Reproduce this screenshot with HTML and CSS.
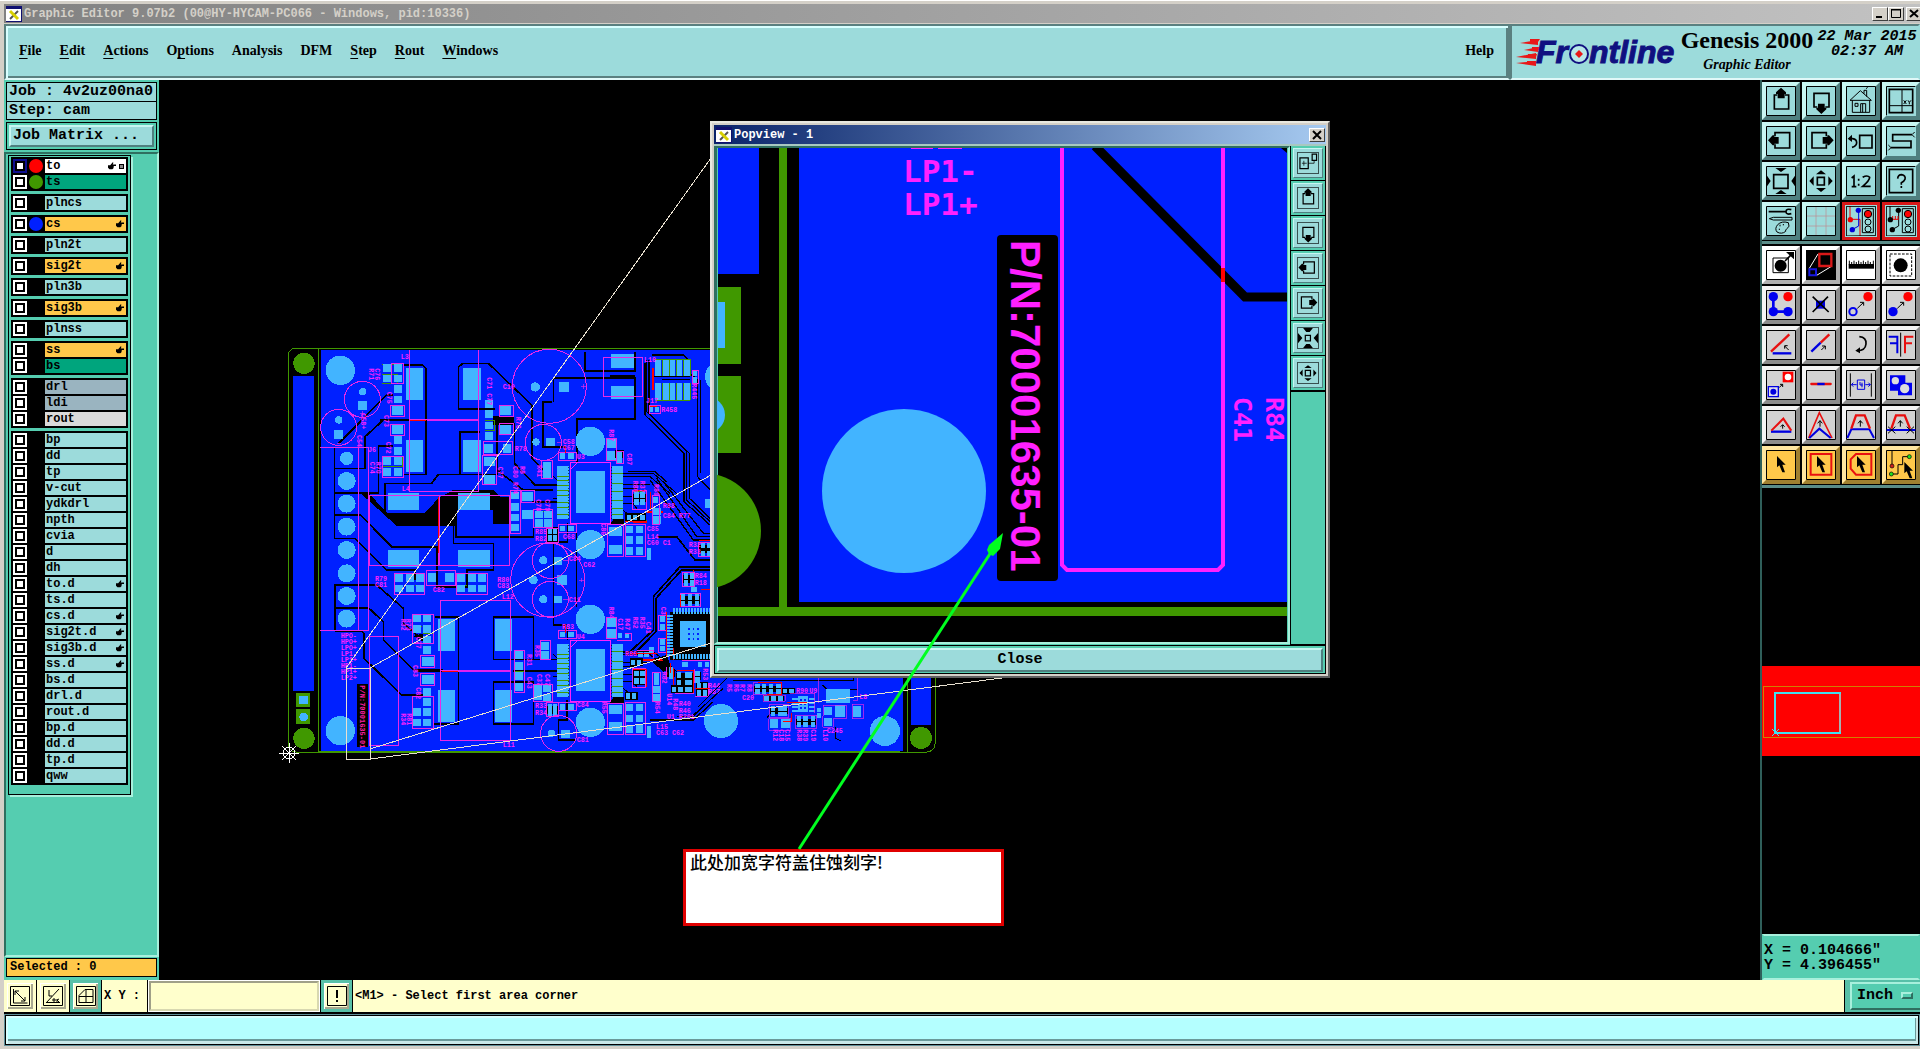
FILE: index.html
```html
<!DOCTYPE html>
<html lang="en">
<head>
<meta charset="utf-8">
<title>Graphic Editor 9.07b2</title>
<link rel="stylesheet" href="styles.css">
</head>
<body>
<svg class="defs" aria-hidden="true">
<defs>
<symbol id="xwin" viewBox="0 0 16 16"><path fill="#fff" d="M0 0h16v16H0z"/><path fill="#101070" d="M0 0h16v3H0zM15 0h1v16h-1zM0 15h16v1H0z"/><path stroke="#555" stroke-width="2" d="M4 13L12 5"/><path stroke="#d8d000" stroke-width="3" d="M4 5l8 8"/></symbol>
<symbol id="hand" viewBox="0 0 22 20"><path d="M0 8h6l7-8 2 1-2 5h9v4h-6l-1 6-3 3H4L0 15z"/></symbol>
<g id="frame"><path fill="none" stroke="#000" stroke-width="3" d="M1.500 1.500h87v87h-87z"/></g>
<symbol id="up" viewBox="0 0 90 90"><use href="#frame"/><path class="k5" d="M34 27H25V69H68V27H57"/><path d="M45 5l15 14v5h-4v13H35V24h-5v-5z"/></symbol>
<symbol id="down" viewBox="0 0 90 90"><use href="#frame"/><path class="k5" d="M34 63H24V22H69V63H58"/><path d="M46 84l15-14v-5h-5V53H36v12h-5v5z"/></symbol>
<symbol id="left" viewBox="0 0 90 90"><use href="#frame"/><path class="k5" d="M27 31V20H71V66H27V55"/><path d="M6 43l14-15h5v5h13v20H25v5h-5z"/></symbol>
<symbol id="right" viewBox="0 0 90 90"><use href="#frame"/><path class="k5" d="M61 31V20H18V66H61V55"/><path d="M83 43l-14-15h-5v5H50v20h14v5h5z"/></symbol>
<symbol id="house" viewBox="0 0 90 90"><use href="#frame"/><path class="k3" d="M12 43L43 14 76 43zM19 43V79H71V43M54 23V13h8v19M44 79V53h15v26M27 52h9v9h-9zM50 53v26M60 8l5-4"/></symbol>
<symbol id="xy" viewBox="0 0 90 90"><path class="k5" d="M10 10H80V80H10z"/><path class="k3" d="M1.500 88V1.500H88M48 10V80M10 59H80M53 43l8 11M61 43l-8 11M66 43l4 6 5-6M70 49v6"/></symbol>
<symbol id="undo" viewBox="0 0 90 90"><use href="#frame"/><path class="k5" d="M41 28H78V66H41z"/><path class="k5" stroke-width="7" d="M12 38h8q12 2 12 12t-14 14"/><path d="M5 38l13-12v22z"/></symbol>
<symbol id="ess" viewBox="0 0 90 90"><path class="k3" d="M1.500 88V1.500H88M86 18l-8 8 8 8M7 57l8 8-8 8"/><path class="k5" d="M78 26H20V45H75V65H15"/></symbol>
<symbol id="zin" viewBox="0 0 90 90"><use href="#frame"/><path class="k5" d="M23 26H66V67H23z"/><path d="M28 6h34L45 18zM28 84h34L45 72zM2 28l12 17L2 62zM88 28L76 45l12 17z"/></symbol>
<symbol id="zout" viewBox="0 0 90 90"><use href="#frame"/><path class="k5" d="M34 34H55V57H34z"/><path d="M45 13l15 12H30zM45 78l15-12H30zM10 45l13-14v28zM80 45L67 31v28z"/></symbol>
<symbol id="zin2" viewBox="0 0 90 90"><use href="#frame"/><path class="k5" d="M34 34H55V57H34z"/><path d="M25 4h40L52 20H38zM25 86h40L52 70H38zM4 25l18 20L4 66zM86 25L68 45l18 21z"/></symbol>
<symbol id="pop" viewBox="0 0 90 90"><use href="#frame"/><path class="k5" d="M12 24H46V68H12zM62 9H80V34H62z"/><path class="k3" d="M46 46h24V34M20 46h20M28 36v20"/></symbol>
<symbol id="one2" viewBox="0 0 90 90"><use href="#frame"/><path class="k5" d="M17 36l7-6V62M17 62h14M38 38v6M38 53v6M50 34q14-8 21 0 0 10-21 27h24"/></symbol>
<symbol id="help" viewBox="0 0 90 90"><path class="k5" d="M10 10H80V80H10z"/><path class="k3" d="M1.500 88V1.500H88"/><path class="k5" d="M35 38q1-12 12-12 13 2 10 14-2 6-11 10v6M46 60v6"/></symbol>
<symbol id="paint" viewBox="0 0 90 90"><use href="#frame"/><path class="k5" d="M8 17H58M76 11q-16-4-16 6t16 6"/><path class="k3" d="M10 38l12-4H78v8H22zM35 56q12-12 32-6 6 12-4 18-6 4-4 8-12 10-26 2-8-10 2-22z"/><path class="k3" d="M42 56v5M52 54v4M40 68v4"/></symbol>
<symbol id="grid" viewBox="0 0 90 90"><path stroke="#c08890" stroke-width="2" fill="none" d="M30 2V88M60 2V88M2 30H88M2 60H88"/><use href="#frame"/></symbol>
<symbol id="sigA" viewBox="0 0 90 90"><path fill="none" stroke="#e00" stroke-width="3" d="M12 0V40H42V90"/><circle cx="13" cy="41" r="8" fill="#e00"/><path fill="none" stroke="#00d" stroke-width="3" d="M38 13V60L20 70"/><circle cx="37" cy="13" r="8" fill="#00d"/><circle cx="19" cy="71" r="8" fill="#00d"/><path class="k3" d="M1 90V1H89V89zM49 8H82V80H49z"/><circle cx="66" cy="24" r="11" fill="red" stroke="#000" stroke-width="3"/><circle class="k3" cx="66" cy="48" r="9"/><circle class="k3" cx="66" cy="69" r="9"/></symbol>
<symbol id="sigB" viewBox="0 0 90 90"><path class="k3" d="M12 0V40M38 13V60L20 70"/><path fill="none" stroke="#e00" stroke-width="3" d="M14 40H38M20 30V40M28 30V40M36 30V40"/><circle cx="13" cy="41" r="8"/><circle cx="37" cy="13" r="8"/><circle cx="19" cy="71" r="8"/><path class="k3" d="M1 90V1H89V89zM49 8H82V80H49z"/><circle cx="66" cy="24" r="11" fill="red" stroke="#000" stroke-width="3"/><circle class="k3" cx="66" cy="48" r="9"/><circle class="k3" cx="66" cy="69" r="9"/></symbol>
<symbol id="feat" viewBox="0 0 90 90"><use href="#frame"/><path class="k3" d="M21 24H67V68H21z"/><circle cx="44" cy="47" r="18"/><path class="k5" d="M57 33L76 14"/><path d="M60 6h24v22z"/></symbol>
<symbol id="popa" viewBox="0 0 90 90"><path d="M0 0H90V90H0z"/><path fill="none" stroke="#fff" stroke-width="3" d="M10 55L36 12M32 76L78 48"/><path fill="none" stroke="#d81818" stroke-width="7" d="M40 12H76V48H40z"/><path fill="none" stroke="#1818e0" stroke-width="6" d="M10 58H30V76H10z"/></symbol>
<symbol id="ruler" viewBox="0 0 90 90"><use href="#frame"/><path d="M8 42H84V56H8z"/><path stroke="#000" stroke-width="3" d="M10 32V44M17 36V44M24 32V44M31 36V44M38 32V44M45 36V44M52 32V44M59 36V44M66 32V44M73 36V44M82 32V44"/></symbol>
<symbol id="selall" viewBox="0 0 90 90"><use href="#frame"/><path class="k3" stroke-dasharray="8 4" d="M12 12H77V78H12z"/><circle cx="44" cy="46" r="21"/></symbol>
<symbol id="net" viewBox="0 0 90 90"><use href="#frame"/><path fill="none" stroke="#0000f0" stroke-width="8" d="M22 21V65H66"/><g fill="#0000f0"><circle cx="22" cy="20" r="14"/><circle cx="22" cy="65" r="14"/><circle cx="66" cy="65" r="14"/></g><circle cx="66" cy="20" r="14" fill="red"/></symbol>
<symbol id="del" viewBox="0 0 90 90"><use href="#frame"/><path fill="#0000e0" d="M30 32H57V56H30z"/><path class="k5" d="M20 20L68 66M66 20L20 66"/></symbol>
<symbol id="mv" viewBox="0 0 90 90"><use href="#frame"/><circle cx="66" cy="20" r="14" fill="red"/><circle cx="21" cy="65" r="11" fill="none" stroke="#0000f0" stroke-width="6"/><path class="k3" d="M34 55L52 38M42 37h11v10"/></symbol>
<symbol id="cp" viewBox="0 0 90 90"><use href="#frame"/><circle cx="66" cy="20" r="14" fill="red"/><circle cx="21" cy="65" r="14" fill="#0000f0"/><path class="k3" d="M34 55L52 38M42 37h11v10"/></symbol>
<symbol id="ang" viewBox="0 0 90 90"><use href="#frame"/><path fill="none" stroke="#e81010" stroke-width="7" d="M15 65L70 13"/><path fill="none" stroke="#0000e0" stroke-width="7" d="M20 70H76"/><path class="k3" d="M68 60L56 48M56 56v-9h9"/></symbol>
<symbol id="ext" viewBox="0 0 90 90"><use href="#frame"/><path stroke="#e81010" stroke-width="7" d="M44 38L70 13"/><path stroke="#0000e0" stroke-width="7" d="M16 65L44 38"/><path class="k3" d="M46 60L58 48M48 48h10v10"/></symbol>
<symbol id="rot" viewBox="0 0 90 90"><use href="#frame"/><path class="k5" d="M40 20Q62 22 60 42T34 62"/><path d="M28 62l14-10v18z"/></symbol>
<symbol id="mir" viewBox="0 0 90 90"><use href="#frame"/><path stroke="#000" stroke-width="3" d="M44 8V80"/><path fill="none" stroke="#0000e0" stroke-width="6" d="M8 20H34V70M12 40H34"/><path fill="none" stroke="#e81010" stroke-width="6" d="M82 20H57V70M57 40H78"/></symbol>
<symbol id="repl" viewBox="0 0 90 90"><use href="#frame"/><path fill="red" d="M50 5H82V37H50z"/><circle cx="66" cy="21" r="10" fill="#fff"/><path fill="#dde" stroke="#0000e0" stroke-width="4" d="M7 50H37V80H7z"/><circle cx="22" cy="65" r="9" fill="#0000e0"/><path class="k3" d="M40 52L50 43M42 43h8v8"/></symbol>
<symbol id="brk" viewBox="0 0 90 90"><use href="#frame"/><path stroke="#e81010" stroke-width="7" stroke-linecap="round" d="M16 42H74"/><path stroke="#0000e0" stroke-width="7" d="M34 42H56"/></symbol>
<symbol id="meas" viewBox="0 0 90 90"><use href="#frame"/><path class="k3" d="M13 10V80M76 10V80"/><path fill="none" stroke="#0000e0" stroke-width="3" d="M34 30H56V58H34zM16 44H32M22 38l-6 6 6 6M58 44H73M67 38l6 6-6 6M42 36v9h8M48 38V52"/></symbol>
<symbol id="surf" viewBox="0 0 90 90"><use href="#frame"/><path fill="#0000f0" d="M12 16H58V38H78V76H36V62H12z"/><circle cx="28" cy="32" r="11" fill="#ddd"/><circle cx="56" cy="56" r="14" fill="#ddd"/></symbol>
<symbol id="tri1" viewBox="0 0 90 90"><use href="#frame"/><path stroke="#0000e0" stroke-width="7" d="M15 65H76"/><path fill="none" stroke="#e81010" stroke-width="6" d="M16 62L52 26 76 62"/><path class="k3" d="M50 56V45M44 50l6-6 6 6"/></symbol>
<symbol id="tri2" viewBox="0 0 90 90"><use href="#frame"/><path fill="none" stroke="#e81010" stroke-width="5" d="M8 84L40 8 78 84"/><path fill="none" stroke="#0000e0" stroke-width="6" d="M10 84L40 56 74 84"/><path class="k3" d="M42 50V32M35 40l7-8 7 8"/></symbol>
<symbol id="trap1" viewBox="0 0 90 90"><use href="#frame"/><path fill="none" stroke="#0000e0" stroke-width="6" d="M4 84L16 58H70L84 84"/><path fill="none" stroke="#e81010" stroke-width="7" d="M16 56L30 16H56L72 56"/><path class="k3" d="M43 50V32M36 40l7-8 7 8"/></symbol>
<symbol id="trap2" viewBox="0 0 90 90"><use href="#frame"/><path stroke="#0000e0" stroke-width="6" d="M2 60H88"/><path fill="none" stroke="#e81010" stroke-width="7" d="M16 56L30 16H56L72 56"/><path class="k3" d="M43 50V32M36 40l7-8 7 8M6 50L28 70M28 50L6 70M62 50L84 70M84 50L62 70"/></symbol>
<g id="arrowhead"><path d="M33 18V52L40 46 49 67H57L49 44H59z"/></g>
<symbol id="cur1" viewBox="0 0 90 90"><use href="#frame"/><use href="#arrowhead"/></symbol>
<symbol id="cur2" viewBox="0 0 90 90"><use href="#frame"/><path fill="none" stroke="#e81010" stroke-width="6" d="M14 12H76V74H14z"/><use href="#arrowhead"/></symbol>
<symbol id="cur3" viewBox="0 0 90 90"><use href="#frame"/><path fill="none" stroke="#e81010" stroke-width="6" d="M30 12H76V74H30L14 56V28z"/><use href="#arrowhead"/></symbol>
<symbol id="cur4" viewBox="0 0 90 90"><use href="#frame"/><path class="k3" d="M18 2V48M16 72H36V44H50V20H70"/><circle cx="18" cy="48" r="6" fill="#d02020" stroke="#000" stroke-width="2"/><circle cx="16" cy="72" r="6" fill="#20e020" stroke="#000" stroke-width="2"/><circle cx="70" cy="20" r="6" fill="#20e020" stroke="#000" stroke-width="2"/><use href="#arrowhead" x="22" y="18"/></symbol>
<symbol id="b1" viewBox="0 0 20 20"><path fill="none" stroke="#000" d="M.5.5h19v19H.5zM3.500 3v14h14M5 5l10 10M5 9V5h4M15 11v4h-4"/></symbol>
<symbol id="b2" viewBox="0 0 20 20"><path fill="none" stroke="#000" d="M.5.5h19v19H.5zM3 17L16 3M3 16.500h14M6 4v6h3M10 13h2v2h-2zM14 13v3M16 13l-2 1 2 2"/></symbol>
<symbol id="b3" viewBox="0 0 20 20"><path fill="none" stroke="#000" d="M.5.5h19v19H.5zM3 16.500h14v-13H9l-6 6zM10 3v14M3 10.500h14"/></symbol>
<symbol id="b4" viewBox="0 0 20 20"><path fill="none" stroke="#000" d="M.5.5h19v19H.5z"/><path d="M9 4h2v8H9zM9 14h2v2H9z"/></symbol>
<g id="qfp"><path fill="none" stroke="#ff20ff" stroke-width="3" d="M871 367H992V550H871zM871 390L892 367"/><path fill="#42b4ff" d="M887 392H974V519H887zM831 378H866V537H831zM995 378H1029V537H995z"/><path stroke="#000" stroke-width="2" stroke-dasharray="3 6" d="M866 380V537M995 380V537"/><path stroke="#409800" stroke-width="3" d="M831 408h35M831 421h35M831 435h35M831 452h35M831 466h35M831 486h35M831 502h35M831 522h35M995 400h34M995 430h34M995 455h34M995 480h34M995 505h34M995 522h34"/><path d="M1000 538h32v16H990z"/><path stroke="#000" stroke-width="3" fill="none" d="M1030 400h90l70 60M1030 410h80l60 50M820 410l10 8M818 475h12M1030 432h80M1030 445h40M1030 470h60M1030 490h30l10 16M1030 512l30 22"/></g>
</defs>
</svg>

<div class="app">
  <header class="titlebar">
    <svg class="appicon"><use href="#xwin"/></svg>
    <h1>Graphic Editor 9.07b2 (00@HY-HYCAM-PC066 - Windows, pid:10336)</h1>
    <div class="winbtns">
      <button aria-label="Minimize"><svg viewBox="0 0 14 12"><path d="M3 8h6v2H3z"/></svg></button>
      <button aria-label="Maximize"><svg viewBox="0 0 14 12"><path fill="none" stroke="#000" d="M2.500 2h9v7.500h-9zM2 1.500h10"/></svg></button>
      <button aria-label="Close window"><svg viewBox="0 0 14 12"><path stroke="#000" stroke-width="2" d="M3 2l8 7M11 2L3 9"/></svg></button>
    </div>
  </header>

  <div class="menurow">
    <nav class="menubar">
      <a href="#"><u>F</u>ile</a><a href="#"><u>E</u>dit</a><a href="#"><u>A</u>ctions</a><a href="#">O<u>p</u>tions</a><a href="#">Analysis</a><a href="#">DFM</a><a href="#"><u>S</u>tep</a><a href="#"><u>R</u>out</a><a href="#"><u>W</u>indows</a>
      <a class="helpmenu" href="#">Help</a>
    </nav>
    <div class="brand">
      <svg class="logo" viewBox="0 0 162 32" role="img" aria-label="Frontline">
        <g fill="#e81818"><path d="M4 7l18-3v5zM8 14l14-3v5zM0 21l20-4v6zM0 27l20-2v5z"/><path d="M14 3h10l-2 3h-8zM16 11h8l-1 3h-7zM12 18h9l-1 3h-8zM11 25h9l-1 3h-8z"/></g>
        <text class="logotext" x="20" y="27">Fr</text><text class="logotext" x="73" y="27">ntline</text>
        <circle cx="63" cy="18" r="9" fill="#b8e8e8" stroke="#101080" stroke-width="2"/><path fill="#e81818" d="M63 14l4 4-4 4-4-4z"/>
      </svg>
      <div class="product"><strong>Genesis 2000</strong><em>Graphic Editor</em></div>
      <div class="clock">22 Mar 2015<br>02:37 AM</div>
    </div>
  </div>

  <div class="main">
    <aside class="sidebar">
      <div class="jobinfo"><div>Job : 4v2uz00na0</div><div>Step: cam</div></div>
      <div class="matrixwrap"><button class="matrix">Job Matrix ...</button></div>
      <div class="layerarea">
        <div class="layers">
          <div class="group">
            <label class="row cur"><input type="checkbox"><i class="dot red"></i><span class="white">to<svg class="hand"><use href="#hand"/></svg><b class="sq"></b></span></label>
            <label class="row"><input type="checkbox"><i class="dot green"></i><span class="mask">ts</span></label>
          </div>
          <div class="group"><label class="row"><input type="checkbox"><i></i><span>plncs</span></label></div>
          <div class="group"><label class="row"><input type="checkbox"><i class="dot blue"></i><span class="sig">cs<svg class="hand"><use href="#hand"/></svg></span></label></div>
          <div class="group"><label class="row"><input type="checkbox"><i></i><span>pln2t</span></label></div>
          <div class="group"><label class="row"><input type="checkbox"><i></i><span class="sig">sig2t<svg class="hand"><use href="#hand"/></svg></span></label></div>
          <div class="group"><label class="row"><input type="checkbox"><i></i><span>pln3b</span></label></div>
          <div class="group"><label class="row"><input type="checkbox"><i></i><span class="sig">sig3b<svg class="hand"><use href="#hand"/></svg></span></label></div>
          <div class="group"><label class="row"><input type="checkbox"><i></i><span>plnss</span></label></div>
          <div class="group">
            <label class="row"><input type="checkbox"><i></i><span class="sig">ss<svg class="hand"><use href="#hand"/></svg></span></label>
            <label class="row"><input type="checkbox"><i></i><span class="mask">bs</span></label>
          </div>
          <div class="group">
            <label class="row"><input type="checkbox"><i></i><span class="drill">drl</span></label>
            <label class="row"><input type="checkbox"><i></i><span class="drill">ldi</span></label>
            <label class="row"><input type="checkbox"><i></i><span class="rout">rout</span></label>
          </div>
          <div class="group">
            <label class="row"><input type="checkbox"><i></i><span>bp</span></label>
            <label class="row"><input type="checkbox"><i></i><span>dd</span></label>
            <label class="row"><input type="checkbox"><i></i><span>tp</span></label>
            <label class="row"><input type="checkbox"><i></i><span>v-cut</span></label>
            <label class="row"><input type="checkbox"><i></i><span>ydkdrl</span></label>
            <label class="row"><input type="checkbox"><i></i><span>npth</span></label>
            <label class="row"><input type="checkbox"><i></i><span>cvia</span></label>
            <label class="row"><input type="checkbox"><i></i><span>d</span></label>
            <label class="row"><input type="checkbox"><i></i><span>dh</span></label>
            <label class="row"><input type="checkbox"><i></i><span>to.d<svg class="hand"><use href="#hand"/></svg></span></label>
            <label class="row"><input type="checkbox"><i></i><span>ts.d</span></label>
            <label class="row"><input type="checkbox"><i></i><span>cs.d<svg class="hand"><use href="#hand"/></svg></span></label>
            <label class="row"><input type="checkbox"><i></i><span>sig2t.d<svg class="hand"><use href="#hand"/></svg></span></label>
            <label class="row"><input type="checkbox"><i></i><span>sig3b.d<svg class="hand"><use href="#hand"/></svg></span></label>
            <label class="row"><input type="checkbox"><i></i><span>ss.d<svg class="hand"><use href="#hand"/></svg></span></label>
            <label class="row"><input type="checkbox"><i></i><span>bs.d</span></label>
            <label class="row"><input type="checkbox"><i></i><span>drl.d</span></label>
            <label class="row"><input type="checkbox"><i></i><span>rout.d</span></label>
            <label class="row"><input type="checkbox"><i></i><span>bp.d</span></label>
            <label class="row"><input type="checkbox"><i></i><span>dd.d</span></label>
            <label class="row"><input type="checkbox"><i></i><span>tp.d</span></label>
            <label class="row"><input type="checkbox"><i></i><span>qww</span></label>
          </div>
        </div>
      </div>
      <div class="selwrap"><div class="selected">Selected : 0</div></div>
    </aside>

    <main class="canvas">
      <svg class="board" viewBox="159 80 1602 900" shape-rendering="crispEdges">
        <rect x="288" y="348" width="647" height="404" rx="8" fill="#000" stroke="#409800"/>
        <path fill="#0020ff" d="M321 350H903V751H321zM911 376H931V725H911z"/>
        <path stroke="#409800" d="M907.500 350V752"/>
        <circle cx="921" cy="738" r="11" fill="#409800"/>
        <circle cx="721" cy="721" r="17" fill="#42b4ff"/><circle cx="885" cy="731" r="15" fill="#42b4ff"/>
        <svg x="280" y="340" width="440" height="420" viewBox="0 0 1320 1260" overflow="visible">
          <path stroke="#409800" stroke-width="4" d="M115 26V1236M115 26H1290M115 1236H1860"/>
          <path fill="#0020ff" d="M39 108H102V1053H39z"/>
          <g fill="#409800"><circle cx="72" cy="70" r="32"/><circle cx="72" cy="1195" r="32"/><path d="M48 1059H90V1101H48zM48 1108H90V1152H48z"/></g>
          <path fill="#42b4ff" d="M57 1067H84V1093H57z"/><circle cx="71" cy="1131" r="13" fill="#42b4ff"/>
          <!-- copper clearances -->
          <path d="M240 458H265L320 518H410L435 518 478 472 520 450H640L660 470H690V552H640V510H530V558H350zM640 228H703V256H640zM300 236H390V244H300zM400 888L430 880V905zM410 986H490V996H410zM231 1033H264V1221H231zM1170 815H1290V960H1170zM1110 960L1160 945 1175 985 1150 995z"/>
          <g fill="none" stroke="#000" stroke-width="5">
            <path d="M370 75H428L438 85V403H370M535 206V82L548 70H625L755 195V355L790 390M645 206H535M600 275H540V403H600M163 325V385H255V290L310 240M176 310L320 165H340M163 385V458H295V318H340M163 458V524H240L335 620H470V740H560V690H640V610H520V470M163 524V595H225L320 690H405V720M315 515V430H455L475 403H650L660 390M650 230V390L730 450H820M703 250V370L765 435H830M165 870V735H290L370 805V850L440 910M165 803H265L310 845V900L400 990H480M165 873H245L252 880V955L365 1065H440M465 1150V1152H535V830H465M640 830H760V958H640V830M640 1025H760V1152H640zM700 958H830M700 992H830M528 470V590H760V560M820 610V855H860M915 35V92H1065V35M820 185V113H1065V237H890V365M817 185H789V320H855M889 550V800M755 485H830M862 550V605H830M862 860V900"/>
            <path d="M860 1080V1140H835V1200H885M1290 660H1245L1190 590H1130M1290 680H1200L1120 770V870L1050 935H1030M1290 690H1205L1128 775V875L1060 945"/>
            <path stroke-width="4" d="M1100 60V215L1220 335V480L1290 545M1107 60V220L1228 340V475L1290 535M1095 70V225L1212 340V485L1290 555M1115 45H1210L1230 65V100L1253 120V410L1290 450M1262 120V400M1120 110H1230M1130 415L1250 590H1290M1110 420L1240 600H1290M1150 425L1270 580H1290M1045 395H1125L1160 425M1190 1130H1240L1310 1060M1110 1140H1240L1300 1085"/>
          </g>
          <path stroke="red" stroke-width="5" fill="none" d="M388 240H438M477 470V675M485 992H535M1118 85V150M1090 960H1150M1060 985V1010M1180 925V960M1240 690V700M1100 515H1150"/>
          <use href="#qfp"/><use href="#qfp" y="534"/>
          <!-- mounting holes and connector column -->
          <g fill="#42b4ff">
            <circle cx="181" cy="91" r="44"/><circle cx="181" cy="1172" r="44"/><circle cx="931" cy="304" r="44"/><circle cx="931" cy="614" r="44"/><circle cx="931" cy="838" r="44"/><circle cx="931" cy="1147" r="44"/><circle cx="1319" cy="110" r="44"/>
            <circle cx="200" cy="355" r="20"/><circle cx="200" cy="423" r="27"/><circle cx="200" cy="491" r="27"/><circle cx="200" cy="560" r="27"/><circle cx="200" cy="630" r="27"/><circle cx="200" cy="700" r="27"/><circle cx="200" cy="768" r="27"/><circle cx="200" cy="836" r="27"/>
            <circle cx="248" cy="155" r="11"/><circle cx="176" cy="240" r="11"/><circle cx="766" cy="141" r="14"/><circle cx="768" cy="306" r="11"/><circle cx="790" cy="661" r="12"/><circle cx="760" cy="720" r="13"/><circle cx="790" cy="778" r="12"/><circle cx="814" cy="1180" r="11"/>
            <path d="M234 184H261V210H234zM162 270H189V297H162zM837 126H867V156H837zM798 294H824V318H798zM822 650H846V674H822zM831 705H860V735H831zM822 768H846V790H822zM843 1170H870V1194H843z"/>
            <path d="M378 83H429V180H378zM549 83H603V180H549zM378 300H429V396H378zM549 300H603V396H549zM324 459H417V510H324zM534 459H630V510H534zM324 630H417V681H324zM534 630H630V681H534zM474 837H525V933H474zM645 837H696V933H645zM474 1050H525V1146H474zM645 1050H696V1146H645zM993 41H1062V84H993zM993 137H1062V177H993z"/>
            <path d="M1126 57H1144V109H1126zM1148 57H1166V109H1148zM1170 57H1186V109H1170zM1190 57H1207V109H1190zM1211 57H1229V109H1211zM1126 128H1144V181H1126zM1148 128H1166V181H1148zM1170 128H1186V181H1170zM1190 128H1207V181H1190zM1211 128H1229V181H1211z"/>
            <path d="M1200 842H1278V920H1200zM1275 478H1290V504H1275z"/>
          </g>
          <path fill="none" stroke="#409800" stroke-width="3" d="M1146 57V109M1168 57V109M1188 57V109M1209 57V109M1231 57V109M1146 128V181M1168 128V181M1188 128V181M1209 128V181M1231 128V181"/>
          <path fill="none" stroke="#42b4ff" stroke-width="17" stroke-dasharray="5 4" d="M1180 812H1290M1180 949H1290M1169 825V950"/>
          <path fill="none" stroke="#0020ff" stroke-width="5" stroke-dasharray="5 8" d="M1225 866H1258M1225 881H1258M1225 896H1258"/>
          <path fill="none" stroke="#409800" stroke-width="3" d="M307 72H366M307 103H352V130H307M340 350H366V380H310M615 242H642V270H615M345 700H400M405 735H436M530 735H560M400 860H425M430 880H458M706 995H732M785 950H808M1060 455H1095M1040 540H1100M765 515H815M800 580H830M1060 990H1095M800 1110H830M1035 1065H1065M1125 57H1230M1125 181H1230"/>
          <!-- chip pads -->
          <path fill="none" stroke="#42b4ff" stroke-width="23" d="M309 83h24M341 83h24M309 115h24M341 115h24M341 147h24M341 178h24M341 300h24M341 332h24M309 363h24M341 363h24M309 395h24M341 395h24M616 191h24M616 222h24M616 256h24M616 288h24M693 466h24M693 500h24M693 532h24M693 562h24M766 523h24M792 523h24M766 548h24M792 548h24M346 713h24M378 713h24M408 713h24M378 745h24M408 745h24M346 745h24M532 713h24M563 713h24M594 713h24M532 745h24M563 745h24M594 745h24M400 835h24M430 835h24M400 867h24M430 867h24M430 899h24M430 930h24M430 1055h24M430 1085h24M430 1115h24M400 1115h24M400 1147h24M430 1147h24M706 945h24M706 978h24M706 1008h24M706 1040h24M762 1045h24M788 1045h24M762 1068h24M788 1072h24M788 378h24M788 402h24M784 918h24M784 944h24M1038 568h22M1068 568h22M1038 600h22M1068 600h22M1068 632h22M1038 632h22M1038 1102h22M1068 1102h22M1068 1135h22M1038 1135h22M1038 1166h22M1068 1166h22M1120 514h22M1120 540h22M1120 1048h22M1120 1072h22"/>
          <path fill="none" stroke="#42b4ff" stroke-width="27" d="M336 212h34M336 267h34M658 212h36M658 267h36M612 363h34M612 417h34M613 324h26M670 324h24M726 468h34M726 522h34M443 713h26M496 713h26M425 965h36M425 1017h36M987 573h38M987 627h38M987 1108h38M987 1160h38M980 310h27M980 345h27M980 846h27M980 880h27"/>
          <path fill="none" stroke="#000" stroke-width="24" d="M1006 343h26M1058 475h40M1036 532h62M802 574h34M802 594h34M1258 628h32M1208 717h36M1202 780h60M1050 967h38M1058 1000h40M1058 1022h40M1162 999h24M1188 1010h54M1188 1028h54M1243 1008h20M1172 1048h66M1248 1038h36M1248 1058h36M802 1109h34M1035 1067h38"/>
          <path fill="none" stroke="#42b4ff" stroke-width="17" d="M840 348h16M864 348h18M840 565h16M864 565h18M840 883h16M864 883h18M840 1100h16M864 1100h18M1108 208h12M1126 208h12M1238 100h14M1238 120h14M1012 343h14M1012 360h14M1015 886h12M1035 886h12M1062 465h14M1080 465h14M1062 485h14M1080 485h14M1040 532h12M1060 532h12M1080 532h14M1120 480h14M805 574h12M820 574h12M805 594h12M820 594h12M1262 616h12M1280 616h12M1262 640h12M1280 640h12M1212 707h12M1230 707h12M1212 728h12M1230 728h12M1232 748h18M1204 770h12M1204 790h12M1225 770h12M1246 770h12M1225 790h12M1246 790h12M1100 632h14M1100 650h14M1140 836h14M1140 860h14M1140 905h14M1140 925h14M1074 943h14M1092 943h14M1108 930h14M1054 967h12M1072 967h12M1062 1000h14M1080 1000h14M1062 1022h14M1080 1022h14M1122 1008h14M1122 1025h14M1166 990h14M1166 1008h14M1205 973h18M1190 1005h14M1215 1005h22M1190 1027h14M1215 1027h22M1245 1000h14M1245 1020h14M1175 1048h14M1195 1048h14M1215 1048h22M1250 1036h12M1268 1036h12M1250 1058h12M1268 1058h12M1255 973h12M1275 973h12M805 1100h12M820 1100h12M805 1118h12M820 1118h12M1038 1067h12M1056 1067h12M1100 1166h14M1100 1184h14"/>
          <path stroke="#000" stroke-width="4" d="M1145 119H1230M990 108h75"/>
          <!-- silkscreen -->
          <g fill="none" stroke="#e828e8" stroke-width="3">
            <path d="M388 30V453H595V30M388 238H595M268 466H688V676H268zM477 466V676M481 780H691V1202H481zM481 992H691M120 322H266V871H120M235 322V871M269 889H355V1216H269zM970 52H1087V170H970z"/>
            <path stroke="#e020f0" stroke-width="6" d="M440 240H595M477 640V676M535 992H690"/>
            <circle cx="247" cy="178" r="54"/><circle cx="176" cy="262" r="54"/><circle cx="808" cy="139" r="111"/><circle cx="790" cy="307" r="54"/><circle cx="803" cy="720" r="111"/><circle cx="811" cy="661" r="54"/><circle cx="811" cy="778" r="54"/><circle cx="836" cy="1180" r="54"/>
            <path d="M335 70H369V130H335zM332 196H374V230H332zM332 252H374V286H332zM307 348H370V412H307zM658 196H700V228H658zM658 250H700V284H658zM608 345H650V434H608zM610 303H696V343H610zM690 452H720V580H690zM724 452H764V486H724zM343 700H432V762H343zM440 692H526V735H440zM530 700H622V762H530zM397 822H460V910H397zM420 945H464V982H420zM420 1000H464V1035H420zM397 1070H460V1164H397zM704 930H734V1056H704zM760 508H818V562H760zM784 362H816V416H784zM780 902H810V958H780zM760 1032H818V1084H760zM836 336H888V360H836zM836 552H888V578H836zM836 870H888V896H836zM836 1088H888V1112H836zM978 296H1010V362H978zM982 554H1030V650H982zM1036 552H1096V650H1036zM1036 1086H1096V1182H1036zM978 832H1010V894H978zM982 1090H1030V1182H982zM1108 196H1142V220H1108zM1236 90H1256V130H1236zM1008 334H1030V370H1008zM1058 450H1098V508H1058zM1118 465H1138V552H1118zM1056 985H1096V1042H1056zM1118 998H1142V1084H1118zM1256 606H1290V650H1256zM1206 696H1244V738H1206zM1200 760H1262V800H1200zM1136 826H1160V870H1136zM1136 896H1160V936H1136zM1206 962H1290M1160 980V1020M1186 1060H1240V1015M1244 988V1030M1246 1070H1284V1030M1070 930H1120V955M1035 880H1055V900H1010M800 564H834V606H800zM800 1088H834V1128H800z"/>
            <path stroke-width="2" d="M904 140h14M911 133v14M830 308h12M898 720h14M905 713v14M850 661h14M850 778h14M872 1180h14M240 220h14M247 213v14M170 310h12"/>
            <path stroke="red" stroke-width="3" d="M1060 452H1094M1110 456V510M1060 548H1100M1160 815V950M1050 940H1130M1110 200H1130M855 320V340M855 858V880M1256 600H1290M1264 748H1290M1170 970V1000M1190 990H1240V1060M1245 1045H1290M1036 545H1100M1060 988H1098V1040M1180 985V1035M1200 800V765"/>
          </g>
          <g class="silk">
            <text x="362" y="56">L3</text><text x="365" y="453">L4</text><text x="668" y="147">C10</text><text x="1092" y="66">L10</text><text x="1098" y="190">J17</text><text x="1144" y="215">R458</text><text x="848" y="312">C58</text><text x="848" y="330">C67</text><text x="890" y="357">U3</text><text x="890" y="896">U4</text><text x="704" y="333">R78</text><text x="264" y="335">J6</text><text x="285" y="724">R79</text><text x="285" y="742">C81</text><text x="458" y="755">C82</text><text x="652" y="726">R80</text><text x="652" y="745">C83</text><text x="665" y="778">L12</text><text x="668" y="1221">L11</text><text x="866" y="664">C84</text><text x="910" y="682">C62</text><text x="866" y="785">C11</text><text x="848" y="598">C68</text><text x="890" y="1206">C81</text><text x="890" y="1100">C84</text><text x="1100" y="574">C85</text><text x="1100" y="596">L14</text><text x="1100" y="616">C60 C1</text><text x="1148" y="503">R88</text><text x="1148" y="535">C84 R77</text><text x="1226" y="622">R32</text><text x="1226" y="643">R33</text><text x="1244" y="713">R84</text><text x="1244" y="734">R18</text><text x="1196" y="1097">R40</text><text x="1196" y="1118">R46</text><text x="1160" y="1137">U1 R201</text><text x="1284" y="1045">R44</text><text x="1284" y="1063">R87</text><text x="1128" y="1168">L15</text><text x="1128" y="1186">C63 C62</text><text x="765" y="583">R85</text><text x="765" y="602">R82</text><text x="765" y="1105">R33</text><text x="765" y="1124">R34</text><text x="846" y="866">R83</text><text x="1035" y="948">R88</text>
            <text x="182" y="895">HPO-</text><text x="182" y="911">HPO+</text><text x="182" y="930">LPO+</text><text x="182" y="947">LP1-</text><text x="182" y="965">LP1+</text><text x="182" y="983">HP1-</text><text x="182" y="1001">HP1+</text><text x="182" y="1020">LP2+</text>
            <text transform="translate(268 85) rotate(90)">R71</text><text transform="translate(286 85) rotate(90)">C76</text><text transform="translate(312 225) rotate(90)">C73</text><text transform="translate(320 155) rotate(90)">C75</text><text transform="translate(244 220) rotate(90)">C58+</text><text transform="translate(232 285) rotate(90)">C54</text><text transform="translate(318 305) rotate(90)">C72</text><text transform="translate(270 365) rotate(90)">C74</text><text transform="translate(288 365) rotate(90)">R70</text><text transform="translate(622 112) rotate(90)">C71 C77</text><text transform="translate(708 230) rotate(90)">R76</text><text transform="translate(654 380) rotate(90)">C77</text><text transform="translate(700 378) rotate(90)">C80 R74</text><text transform="translate(720 378) rotate(90)">R8</text><text transform="translate(770 375) rotate(90)">R41</text><text transform="translate(988 268) rotate(90)">R87</text><text transform="translate(1040 340) rotate(90)">C87</text><text transform="translate(1236 130) rotate(90)">R446</text><text transform="translate(1058 422) rotate(90)">R86</text><text transform="translate(1080 422) rotate(90)">R37</text><text transform="translate(1122 432) rotate(90)">R89</text><text transform="translate(768 478) rotate(90)">C78</text><text transform="translate(796 478) rotate(90)">C79</text><text transform="translate(964 550) rotate(90)">C86</text><text transform="translate(362 836) rotate(90)">R32</text><text transform="translate(378 836) rotate(90)">R73</text><text transform="translate(408 890) rotate(90)">C77</text><text transform="translate(400 975) rotate(90)">C83</text><text transform="translate(408 1042) rotate(90)">C82</text><text transform="translate(362 1120) rotate(90)">R34</text><text transform="translate(380 1120) rotate(90)">R81</text><text transform="translate(740 942) rotate(90)">R31</text><text transform="translate(740 1010) rotate(90)">C43</text><text transform="translate(770 1002) rotate(90)">C37</text><text transform="translate(796 1002) rotate(90)">C47</text><text transform="translate(764 915) rotate(90)">R35</text><text transform="translate(988 800) rotate(90)">R84</text><text transform="translate(1014 835) rotate(90)">C17</text><text transform="translate(1036 835) rotate(90)">R47</text><text transform="translate(1060 830) rotate(90)">R52</text><text transform="translate(1080 830) rotate(90)">R35</text><text transform="translate(1098 845) rotate(90)">C41</text><text transform="translate(1144 800) rotate(90)">C3</text><text transform="translate(1162 1060) rotate(90)">U14</text><text transform="translate(1180 1075) rotate(90)">R48</text><text transform="translate(1125 1085) rotate(90)">R54</text><text transform="translate(1145 995) rotate(90)">R82</text><text transform="translate(966 1085) rotate(90)">R55</text><text transform="translate(1270 985) rotate(90)">R53</text>
          </g>
          <text class="pn" transform="translate(240 1036) rotate(90)">P/N:70001635-01</text>
        </svg>
        <svg x="640" y="660" width="310" height="110" viewBox="0 0 930 330" overflow="visible">
          <path fill="none" stroke="#000" stroke-width="3" d="M280 62H640V50M260 55L175 140M250 85L160 165M548 75L560 88H650M395 155L380 175M585 200V235L602 242"/>
          <path fill="#42b4ff" d="M558 86H630V130H558zM586 135H615V172H586zM639 137H664V172H639zM552 140H576V166H552zM552 173H576V197H552zM390 178H415V205H390zM423 178H450V205H423zM474 108H505V156H474z"/>
          <path fill="none" stroke="#000" stroke-width="18" d="M343 86h82M426 93h38M370 115h62M390 154h54M468 185h60"/>
          <path fill="none" stroke="#42b4ff" stroke-width="14" d="M345 78h14M365 78h14M386 78h14M408 78h14M345 94h14M365 94h14M386 94h14M408 94h14M428 93h14M447 93h14M372 115h14M394 115h14M415 115h14M392 146h14M392 162h14M414 146h28M414 162h28M470 176h14M490 176h14M512 176h14M470 194h14M490 194h14M512 194h14M532 150h12M532 166h12"/>
          <path stroke="#42b4ff" stroke-width="6" d="M455 116h18M455 128h18M455 140h18M455 152h18M506 116h18M506 128h18M506 140h18M506 152h18"/>
          <path fill="#0020ff" d="M480 118h6v6h-6zM491 118h6v6h-6zM480 130h6v6h-6zM491 130h6v6h-6zM480 142h6v6h-6zM491 142h6v6h-6z"/>
          <path fill="none" stroke="#e828e8" stroke-width="2" d="M340 68H425V104H340zM370 106H436V124H370zM388 134H446V172H388zM386 176H452V210H386zM466 166H530V204H466zM535 50V130M652 50V122H640M550 136H618V176H580V202H548zM637 133H670V176H637zM450 100H524V158"/>
          <path fill="none" stroke="red" stroke-width="3" d="M355 68H425V104H380M440 128H500M455 160V185H430"/>
          <g class="silk"><text x="306" y="120">C20</text><text x="468" y="98">R90</text><text x="508" y="98">U9</text><text x="560" y="218">C245</text><text x="658" y="118">L8</text>
          <text transform="translate(262 72) rotate(90)">R5</text><text transform="translate(282 72) rotate(90)">R6</text><text transform="translate(300 72) rotate(90)">R7</text><text transform="translate(322 72) rotate(90)">R8</text><text transform="translate(398 208) rotate(90)">R12</text><text transform="translate(418 208) rotate(90)">C18</text><text transform="translate(434 208) rotate(90)">C15</text><text transform="translate(470 208) rotate(90)">R38</text><text transform="translate(490 208) rotate(90)">R39</text><text transform="translate(512 208) rotate(90)">C19</text><text transform="translate(548 208) rotate(90)">L10</text></g>
        </svg>
        <!-- popview zoom guides -->
        <path fill="none" stroke="#e8e0d0" d="M346 668H370V759H346zM346 668L711 158M370 668L711 475M370 749L711 643M370 759L1002 678"/>
        <path fill="none" stroke="#fff" d="M279 753H299M289 743V763M282 746L296 760M296 746L282 760"/><circle cx="289" cy="753" r="6" fill="none" stroke="#fff"/>
      </svg>

      <section class="popview" aria-label="Popview - 1">
        <div class="poptitle"><svg class="appicon"><use href="#xwin"/></svg><span>Popview - 1</span><button class="popx" aria-label="Close popview"><svg viewBox="0 0 14 12"><path stroke="#000" stroke-width="2" d="M3 2l8 8M11 2L3 10"/></svg></button></div>
        <div class="popbody">
          <svg class="popdraw" viewBox="718 148 569 494">
            <path d="M718 148H1287V642H718z"/>
            <path fill="#0020ff" d="M718 148H759V274H718zM799 148H1287V602H799z"/>
            <path fill="#409800" d="M779 148H787V607H1287V616H718V607H779zM718 287H741V364H718zM718 376H741V453H718z"/>
            <circle cx="703" cy="531" r="58" fill="#409800"/>
            <path fill="#42b4ff" d="M718 302H725V348H718z"/><circle cx="707" cy="415" r="18" fill="#42b4ff"/><circle cx="904" cy="491" r="82" fill="#42b4ff"/>
            <path fill="none" stroke="#000" stroke-width="9" d="M1095 146L1245 297H1287"/>
            <path d="M1281 148h6v5z"/>
            <rect x="997" y="235" width="61" height="346" rx="4"/>
            <path fill="none" stroke="#ff20ff" stroke-width="4" d="M1062 148V565L1067 570H1218L1223 565V148"/>
            <path fill="red" d="M1221 268h4v14h-4z"/>
            <path fill="#ff20ff" d="M911 148h22v1h-22zM938 148h24v1h-24z"/>
            <text class="lp" x="903" y="182">LP1-</text><text class="lp" x="903" y="215">LP1+</text>
            <text class="partno" transform="translate(1011 240) rotate(90)">P/N:70001635-01</text>
            <text class="ref" transform="translate(1234 397) rotate(90)">C41</text><text class="ref" transform="translate(1266 397) rotate(90)">R84</text>
          </svg>
          <div class="poptools">
            <button aria-label="Select window"><svg><use href="#pop"/></svg></button><button aria-label="Pan up"><svg><use href="#up"/></svg></button><button aria-label="Pan down"><svg><use href="#down"/></svg></button><button aria-label="Pan left"><svg><use href="#left"/></svg></button><button aria-label="Pan right"><svg><use href="#right"/></svg></button><button aria-label="Zoom in"><svg><use href="#zin2"/></svg></button><button aria-label="Zoom out"><svg><use href="#zout"/></svg></button>
          </div>
        </div>
        <div class="popfoot"><button>Close</button></div>
      </section>

      <div class="note" lang="zh">此处加宽字符盖住蚀刻字!</div>
      <svg class="arrow" viewBox="0 0 220 330"><path stroke="#00ff20" stroke-width="3" d="M8 323L204 20"/><path fill="#00ff20" d="M212 7l-3 16-7 7-4-2-2-4 2-5z"/></svg>
    </main>

    <aside class="rightbar">
      <div class="tools view">
        <button aria-label="Pan up"><svg><use href="#up"/></svg></button><button aria-label="Pan down"><svg><use href="#down"/></svg></button><button aria-label="Home"><svg><use href="#house"/></svg></button><button aria-label="Zoom to XY"><svg><use href="#xy"/></svg></button>
        <button aria-label="Pan left"><svg><use href="#left"/></svg></button><button aria-label="Pan right"><svg><use href="#right"/></svg></button><button aria-label="Previous view"><svg><use href="#undo"/></svg></button><button aria-label="Serpentine"><svg><use href="#ess"/></svg></button>
        <button aria-label="Zoom in"><svg><use href="#zin"/></svg></button><button aria-label="Zoom out"><svg><use href="#zout"/></svg></button><button aria-label="Scale 1:2"><svg><use href="#one2"/></svg></button><button aria-label="Help"><svg><use href="#help"/></svg></button>
        <button aria-label="Display settings"><svg><use href="#paint"/></svg></button><button aria-label="Grid"><svg><use href="#grid"/></svg></button><button class="hot" aria-label="Net check"><svg><use href="#sigA"/></svg></button><button class="hot" aria-label="Rule check"><svg><use href="#sigB"/></svg></button>
      </div>
      <div class="tools edit">
        <button class="w" aria-label="Feature"><svg><use href="#feat"/></svg></button><button class="w" aria-label="Popview"><svg><use href="#popa"/></svg></button><button class="w" aria-label="Measure"><svg><use href="#ruler"/></svg></button><button class="w" aria-label="Highlight"><svg><use href="#selall"/></svg></button>
        <button aria-label="Add net"><svg><use href="#net"/></svg></button><button aria-label="Delete"><svg><use href="#del"/></svg></button><button aria-label="Move"><svg><use href="#mv"/></svg></button><button aria-label="Copy"><svg><use href="#cp"/></svg></button>
        <button aria-label="Angle"><svg><use href="#ang"/></svg></button><button aria-label="Extend"><svg><use href="#ext"/></svg></button><button aria-label="Rotate"><svg><use href="#rot"/></svg></button><button aria-label="Mirror"><svg><use href="#mir"/></svg></button>
        <button aria-label="Replace"><svg><use href="#repl"/></svg></button><button aria-label="Break"><svg><use href="#brk"/></svg></button><button aria-label="Resize"><svg><use href="#meas"/></svg></button><button aria-label="Surface"><svg><use href="#surf"/></svg></button>
        <button aria-label="Drag one"><svg><use href="#tri1"/></svg></button><button aria-label="Drag two"><svg><use href="#tri2"/></svg></button><button aria-label="Drag line"><svg><use href="#trap1"/></svg></button><button aria-label="Drag segment"><svg><use href="#trap2"/></svg></button>
        <button class="o" aria-label="Select"><svg><use href="#cur1"/></svg></button><button class="o" aria-label="Select frame"><svg><use href="#cur2"/></svg></button><button class="o" aria-label="Select polygon"><svg><use href="#cur3"/></svg></button><button class="o" aria-label="Select net"><svg><use href="#cur4"/></svg></button>
      </div>
      <div class="overview"><svg viewBox="0 0 158 90" shape-rendering="crispEdges"><path fill="red" d="M0 0h158v90H0z"/><path fill="none" stroke="#d08000" d="M160 20.500H1V71.500H160"/><path fill="none" stroke="#40e0f0" stroke-width="2" d="M13 27H78V67H13z"/><path stroke="#a8b0b0" stroke-width="2" d="M78 28V66"/><path stroke="#40e0f0" d="M10 63l7 7M17 63l-7 7"/></svg></div>
      <div class="coords">X = 0.104666"<br>Y = 4.396455"</div>
    </aside>
  </div>

  <footer class="cmdbar">
    <button class="cb" aria-label="Distance"><svg><use href="#b1"/></svg></button>
    <button class="cb" aria-label="Angle snap"><svg><use href="#b2"/></svg></button>
    <button class="cb on" aria-label="Grid snap"><svg><use href="#b3"/></svg></button>
    <label class="xylabel" for="xyin">X Y :</label>
    <input id="xyin" class="xyin" type="text">
    <button class="cb on" aria-label="Interrupt"><svg><use href="#b4"/></svg></button>
    <div class="msg">&lt;M1&gt; - Select first area corner</div>
    <div class="unitwrap"><select class="unit" aria-label="Units"><option>Inch</option><option>MM</option></select><i class="knob"></i></div>
  </footer>
  <div class="status"><div></div></div>
</div>
</body>
</html>
```
FILE: styles.css
```css
* { box-sizing: border-box; }
:root {
  --teal: #55cdb0;
  --cyan: #9cdbdb;
  --hi: #c8f6f2;
  --lo: #4f7f7f;
  --cream: #ffffcc;
  --orange: #ffc84a;
  --mono: "Liberation Mono", monospace;
  --serif: "Liberation Serif", serif;
}
body { margin: 0; background: #d4d0c8; color: #000; font: bold 12px/16px var(--mono); overflow: hidden; }
button, input, select { font: inherit; color: inherit; padding: 0; margin: 0; border-radius: 0; appearance: none; }
svg { display: block; }
.defs { position: absolute; width: 0; height: 0; }
.k3 { fill: none; stroke: #000; stroke-width: 3px; }
.k5 { fill: none; stroke: #000; stroke-width: 5px; }

.app { min-height: 100vh; display: flex; flex-direction: column; padding: 3px 0 3px 4px; border-top: 1px solid #fff; }

.titlebar { height: 20px; display: flex; align-items: center; gap: 2px; padding-left: 2px; background: linear-gradient(90deg, #828282, #c2c2c2); border-bottom: 1px solid #d4d0c8; overflow: hidden; }
.titlebar h1 { margin: 0; flex: 1; font-size: 12px; color: #d4d0c8; white-space: nowrap; }
.appicon { width: 16px; height: 16px; }
.winbtns { display: flex; width: 48px; flex: none; }
.winbtns button { width: 16px; height: 14px; flex: none; background: #d4d0c8; border: 1px solid; border-color: #fff #404040 #404040 #fff; }
.winbtns button:last-child { margin-left: 2px; }
.winbtns svg { width: 14px; height: 12px; }

.menurow { display: flex; height: 56px; font: bold 14px/18px var(--serif); }
.menubar { flex: 1; display: flex; align-items: center; gap: 18px; padding: 0 14px 2px 13px; background: var(--cyan); border: 2px solid; border-color: #5a8080 #5a8080 #e0f8f8 #5a8080; box-shadow: inset 2px 2px #d8ffff, inset -2px -2px #5a8080; }
.menubar a { color: #000; text-decoration: none; }
.menubar u { text-underline-offset: 3px; }
.helpmenu { margin-left: auto; }
.brand { width: 410px; display: flex; background: var(--cyan); border: 2px solid; border-color: #5a8080 transparent #e0f8f8 #5a8080; padding-left: 4px; overflow: hidden; }
.logo { width: 162px; height: 32px; margin-top: 10px; flex: none; }
.logotext { font: italic bold 32px "Liberation Sans", sans-serif; fill: #101080; stroke: #101080; stroke-width: 1px; }
.product { width: 138px; flex: none; display: flex; flex-direction: column; padding-top: 1px; text-align: center; }
.product strong { font-size: 24px; line-height: 26px; white-space: nowrap; }
.product em { font-size: 14px; line-height: 24px; }
.clock { width: 102px; flex: none; font: italic bold 15px/15px var(--mono); text-align: center; padding-top: 3px; white-space: nowrap; }

.main { flex: 1; display: flex; min-height: 0; }
.sidebar { width: 155px; display: flex; flex-direction: column; background: var(--teal); }
.jobinfo { margin: 2px 2px 0; border: 1px solid #000; background: var(--cyan); font: bold 15px/18px var(--mono); }
.jobinfo div { height: 18px; padding-left: 2px; white-space: nowrap; }
.jobinfo div + div { border-top: 1px solid #000; }
.matrixwrap { margin: 2px 2px 0; border: 1px solid #000; padding: 2px; }
.matrix { display: block; width: 100%; height: 22px; background: var(--cyan); border: 2px solid; border-color: var(--hi) var(--lo) var(--lo) var(--hi); font: bold 15px/18px var(--mono); text-align: left; padding-left: 2px; }
.layerarea { flex: 1; margin-top: 2px; border: 2px solid; border-color: #2f6f60 #a8f0dc #a8f0dc #2f6f60; padding: 1px 0 0 2px; }
.layers { width: 123px; border: 1px solid #000; padding: 1px 2px 9px; display: flex; flex-direction: column; gap: 3px; box-shadow: 2px 2px #a8f0dc; }
.group { background: #000; padding: 2px; display: flex; flex-direction: column; gap: 2px; }
.row { display: flex; height: 14px; align-items: center; }
.row input { width: 14px; height: 14px; background: #fff; border: 2px solid #fff; outline: 2px solid #000; outline-offset: -4px; }
.row.cur input { border-color: #101090; }
.row > i { width: 14px; height: 14px; margin: 0 2px; border-radius: 7px; }
.dot.red { background: red; }
.dot.green { background: #409800; }
.dot.blue { background: #0020ff; }
.row > span { flex: 1; display: flex; align-items: center; height: 14px; padding: 0 2px 0 1px; line-height: 14px; background: var(--cyan); }
.row > .white { background: #fff; }
.row > .mask { background: #00a57d; }
.row > .sig { background: var(--orange); }
.row > .drill { background: #9ab4c0; }
.row > .rout { background: #dadada; }
.hand { width: 8px; height: 8px; margin-left: auto; }
.sq { width: 5px; height: 5px; border: 1px solid #000; background: #888; margin-left: 3px; }
.selwrap { padding: 1px 2px 3px; }
.selected { border: 1px solid #000; background: var(--orange); height: 19px; line-height: 17px; padding-left: 3px; }

.canvas { flex: 1; position: relative; background: #000; overflow: hidden; min-width: 0; }
.board { width: 1602px; height: 900px; }
.silk { font: bold 20px "Liberation Mono", monospace; fill: #ff20ff; }
.pn { font: bold 21px "Liberation Mono", monospace; fill: #ff20a0; }

.popview { position: absolute; left: 551px; top: 41px; width: 620px; height: 557px; background: #55cdb0; border: 2px solid; border-color: #e8e8e0 #606060 #606060 #e8e8e0; box-shadow: inset 0 0 0 2px #d4d0c8; padding: 2px; display: flex; flex-direction: column; }
.poptitle { height: 19px; flex: none; display: flex; align-items: center; gap: 2px; padding: 0 1px 0 2px; color: #fff; background: linear-gradient(90deg, #0a246a, #a6caf0); }
.popx { margin-left: auto; width: 16px; height: 14px; background: #d4d0c8; border: 1px solid; border-color: #fff #404040 #404040 #fff; }
.popx svg { width: 14px; height: 12px; }
.popbody { flex: 1; display: flex; border-top: 2px solid #a8c8c0; }
.popdraw { flex: 1; min-width: 0; height: 498px; border: 2px solid; border-color: #2f6f60 #a8f0dc #a8f0dc #2f6f60; border-left-width: 3px; }
.poptools { width: 36px; border: 1px solid #000; border-width: 0 1px 1px; display: flex; flex-direction: column; gap: 1px; background: #000 linear-gradient(var(--teal), var(--teal)) 0 246px no-repeat; }
.poptools button { width: 34px; height: 34px; background: var(--cyan); border: 3px solid; border-color: var(--hi) var(--lo) var(--lo) var(--hi); outline: 2px solid var(--teal); outline-offset: -2px; display: grid; place-items: center; }
.poptools svg { width: 22px; height: 22px; }
.popfoot { height: 29px; flex: none; padding: 2px 2px 1px; border: 1px solid #000; }
.popfoot button { display: block; width: 100%; height: 24px; background: var(--cyan); border: 2px solid; border-color: var(--hi) var(--lo) var(--lo) var(--hi); font: bold 15px/20px var(--mono); }
.lp { font: bold 31px "DejaVu Sans Mono", monospace; fill: #ff20ff; }
.partno { font: bold 42px "Liberation Sans", sans-serif; fill: #ff20ff; }
.ref { font: bold 25px "DejaVu Sans Mono", monospace; fill: #ff20ff; }

.note { position: absolute; left: 524px; top: 769px; width: 321px; height: 77px; background: #fff; border: 3px solid #e00000; padding: 1px 4px; font: 500 17px/18px "Noto Sans CJK SC", sans-serif; }
.arrow { position: absolute; left: 632px; top: 446px; width: 220px; height: 330px; pointer-events: none; }

.rightbar { width: 160px; display: flex; flex-direction: column; background: #000; border-left: 2px solid #2f5f5a; overflow: hidden; }
.tools { display: grid; grid-template-columns: repeat(4, 38px); gap: 2px; flex: none; }
.view { padding: 2px 0 1px; border-bottom: 3px solid #5a8c88; }
.edit { padding: 2px 0 1px; border-bottom: 3px solid #5a8c88; }
.tools button { width: 38px; height: 38px; background: var(--cyan); border: 4px solid; border-color: var(--hi) var(--lo) var(--lo) var(--hi); }
.tools svg { width: 30px; height: 30px; }
.tools .hot { border: 3px solid #d81818; display: grid; place-items: center; }
.edit button { background: #d2d2d2; border-color: #f4f4f4 #8c8c8c #8c8c8c #f4f4f4; }
.edit .w { background: #fff; border-color: #fff #b0b0b0 #b0b0b0 #fff; }
.edit .o { background: var(--orange); border-color: #ffe6a0 #a08030 #a08030 #ffe6a0; }
.overview { flex: 1; padding-top: 178px; }
.overview svg { width: 158px; height: 90px; }
.coords { height: 46px; background: var(--teal); border: 2px solid; border-color: #a8f0dc transparent #a8f0dc transparent; padding: 7px 0 0; font: bold 15px/15px var(--mono); flex: none; }

.cmdbar { height: 34px; display: flex; gap: 1px; background: #000; border-bottom: 2px solid #000; }
.cb { width: 32px; flex: none; background: var(--cream); border: 3px solid var(--cream); box-shadow: inset 1px 1px #fff, inset -2px -2px #a8a890; display: grid; place-items: center; }
.cb svg { width: 20px; height: 20px; }
.cb.on { border-color: #58c0a8; width: 31px; }
.xylabel { width: 45px; padding-left: 2px; background: var(--cream); line-height: 33px; white-space: nowrap; flex: none; }
.xyin { width: 172px; background: var(--cream); border: 3px solid; border-color: #a0a088 #d8d8b0 #d8d8b0 #a0a088; flex: none; outline: 1px solid #fff; outline-offset: -1px; }
.msg { flex: 1; background: var(--cream); line-height: 33px; padding-left: 2px; }
.unitwrap { position: relative; width: 75px; background: #58c0a8; padding: 2px 0 2px 5px; }
.unit { width: 74px; height: 28px; background: var(--teal); border: 2px solid; border-color: #a8f0dc #2f6f60 #2f6f60 #a8f0dc; padding-left: 5px; font: bold 15px/20px var(--mono); }
.knob { position: absolute; left: 56px; top: 12px; width: 12px; height: 7px; border: 2px solid; border-color: #a8f0dc #2f6f60 #2f6f60 #a8f0dc; background: var(--teal); }
.status { height: 32px; padding: 1px; background: #5f8f98; }
.status div { height: 30px; border: 1px solid #000; background: #b4ffff; box-shadow: inset 2px 2px #d8ffff, inset -2px -3px #c8e8e8, inset -3px -5px #6a9a9a; }
```
